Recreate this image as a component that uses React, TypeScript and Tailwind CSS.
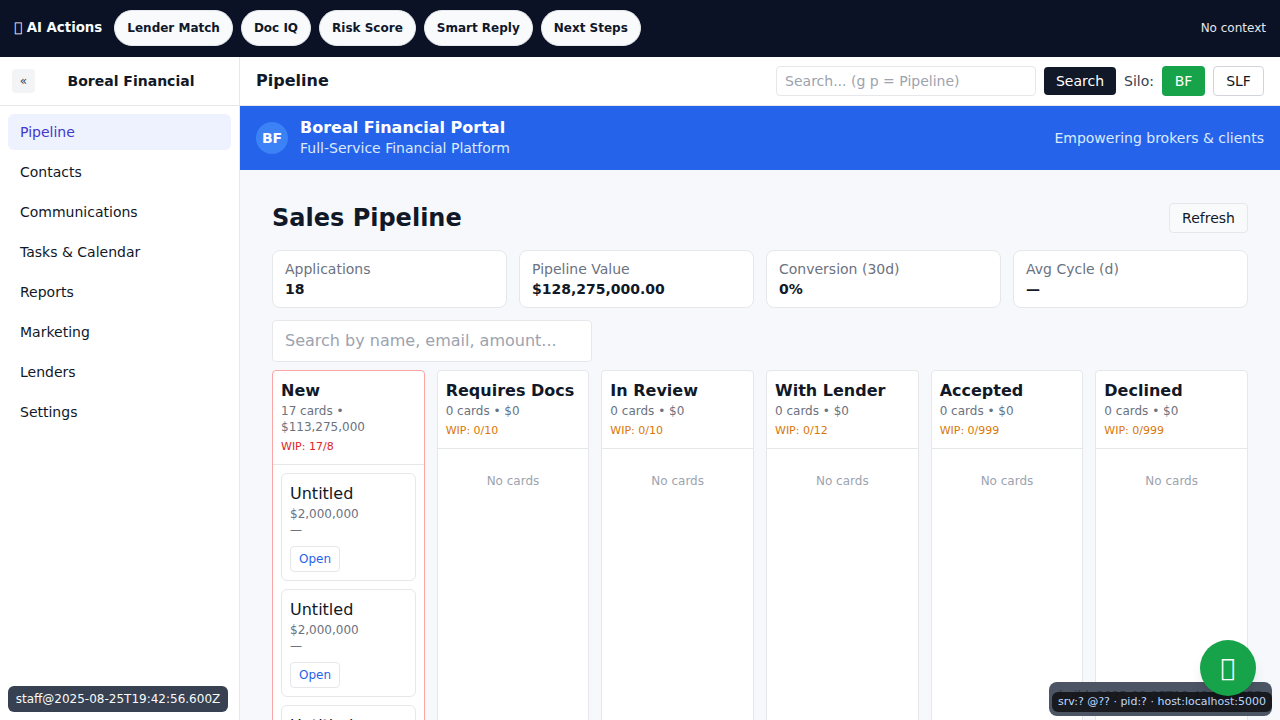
const nav = ["Pipeline", "Contacts", "Communications", "Tasks & Calendar", "Reports", "Marketing", "Lenders", "Settings"];
const actions = ["Lender Match", "Doc IQ", "Risk Score", "Smart Reply", "Next Steps"];
const stats = [
  ["Applications", "18"],
  ["Pipeline Value", "$128,275,000.00"],
  ["Conversion (30d)", "0%"],
  ["Avg Cycle (d)", "—"],
];
const cols = [
  ["Requires Docs", "WIP: 0/10"],
  ["In Review", "WIP: 0/10"],
  ["With Lender", "WIP: 0/12"],
  ["Accepted", "WIP: 0/999"],
  ["Declined", "WIP: 0/999"],
];

function Card() {
  return (
    <div className="rounded-md border border-[#e5e7eb] bg-white px-2 py-2 shrink-0 h-[108px]">
      <div className="text-[16px] leading-[24px] text-[#111827]">Untitled</div>
      <div className="text-[12px] leading-[16px] text-[#6b7280]">$2,000,000</div>
      <div className="text-[12px] leading-[16px] text-[#6b7280]">—</div>
      <button className="mt-2 h-[26px] w-[50px] rounded border border-[#e5e7eb] bg-white text-[12px] text-[#2563eb]">Open</button>
    </div>
  );
}

export default function App() {
  return (
    <div className="w-[1280px] h-[720px] overflow-hidden relative flex flex-col bg-white text-[#111827] font-['DejaVu_Sans',sans-serif]">
      <div className="h-[57px] shrink-0 bg-[#0b1226] flex items-center pl-[14px] pr-[14px] pb-px">
        <span className="text-[13.33px] font-bold text-[#f8fafc] mr-3">{"\u{E000}"} AI Actions</span>
        <div className="flex gap-2">
          {actions.map((a) => (
            <button key={a} className="h-[36px] w-auto px-3 rounded-full bg-[#f8fafc] border border-[#e5e7eb] text-[12px] font-bold text-[#0f172a]">{a}</button>
          ))}
        </div>
        <span className="ml-auto text-[12px] text-[#e5e7eb]">No context</span>
      </div>
      <div className="flex-1 flex min-h-0">
        <aside className="w-[240px] shrink-0 border-r border-[#e5e7eb] bg-white flex flex-col relative">
          <div className="h-[49px] shrink-0 border-b border-[#e5e7eb] flex items-center pl-3 relative">
            <button className="w-[23px] h-[24px] rounded bg-[#f3f4f6] text-[12px] text-[#374151] flex items-center justify-center">«</button>
            <div className="flex-1 text-center text-[14px] font-bold text-[#111827] pr-[12px]">Boreal Financial</div>
          </div>
          <nav className="px-2 pt-2 flex flex-col gap-1">
            {nav.map((n, i) => (
              <div key={n} className={"h-[36px] rounded-md px-3 flex items-center text-[14px] " + (i === 0 ? "bg-[#eef2ff] text-[#4338ca]" : "text-[#111827]")}>{n}</div>
            ))}
          </nav>
          <div className="absolute left-2 top-[629px] h-[26px] w-[220px] rounded-md bg-[#374151] text-[12px] text-[#f9fafb] flex items-center justify-center">staff@2025-08-25T19:42:56.600Z</div>
        </aside>
        <div className="flex-1 min-w-0 flex flex-col bg-[#f7f8fc]">
          <div className="h-[49px] shrink-0 bg-white border-b border-[#e5e7eb] flex items-center pl-4 pr-4">
            <div className="text-[16px] font-bold text-[#111827] flex-1">Pipeline</div>
            <div className="w-[260px] h-[30px] rounded border border-[#e5e7eb] bg-white px-2 flex items-center text-[14px] text-[#9ca3af]">Search... (g p = Pipeline)</div>
            <button className="ml-2 w-[72px] h-[28px] rounded bg-[#111827] text-[14px] text-white">Search</button>
            <span className="ml-2 text-[14px] text-[#374151]">Silo:</span>
            <button className="ml-2 w-[43px] h-[30px] rounded bg-[#16a34a] text-[14px] text-white">BF</button>
            <button className="ml-2 w-[51px] h-[30px] rounded border border-[#d1d5db] bg-white text-[14px] text-[#111827]">SLF</button>
          </div>
          <div className="h-[64px] shrink-0 bg-[#2563eb] flex items-center pl-4 pr-4 text-white">
            <div className="w-8 h-8 rounded-full bg-[#3b82f6] flex items-center justify-center text-[14px] font-bold">BF</div>
            <div className="ml-3 pb-[2px]">
              <div className="text-[16px] leading-[21px] font-bold">Boreal Financial Portal</div>
              <div className="text-[14px] leading-[20px] text-[#dbeafe]">Full-Service Financial Platform</div>
            </div>
            <div className="ml-auto text-[14px] text-[#dbeafe]">Empowering brokers & clients</div>
          </div>
          <div className="flex-1 min-h-0 overflow-hidden px-8 pt-[32px]">
            <div className="flex items-center justify-between h-[32px]">
              <h1 className="text-[24px] font-bold text-[#111827]">Sales Pipeline</h1>
              <button className="w-[79px] h-[30px] rounded border border-[#e5e7eb] bg-[#f9fafb] text-[14px] text-[#111827]">Refresh</button>
            </div>
            <div className="mt-[16px] grid grid-cols-4 gap-3">
              {stats.map(([k, v]) => (
                <div key={k} className="h-[58px] rounded-lg border border-[#e5e7eb] bg-white px-3 py-2">
                  <div className="text-[14px] leading-[20px] text-[#6b7280]">{k}</div>
                  <div className="text-[14px] leading-[20px] font-bold text-[#111827]">{v}</div>
                </div>
              ))}
            </div>
            <div className="mt-3 w-[320px] h-[42px] rounded border border-[#e5e7eb] bg-white px-3 flex items-center text-[16px] text-[#9ca3af]">Search by name, email, amount...</div>
            <div className="mt-2 grid grid-cols-6 gap-3">
              <div className="h-[400px] rounded border border-[#fca5a5] bg-white flex flex-col min-w-0">
                <div className="px-2 pt-2 pb-2 border-b border-[#e5e7eb] h-[94px] shrink-0">
                  <div className="text-[16px] leading-[24px] font-bold text-[#111827]">New</div>
                  <div className="text-[12px] leading-[16px] text-[#6b7280]">17 cards • $113,275,000</div>
                  <div className="mt-1 text-[11px] leading-[16px] text-[#dc2626]">WIP: 17/8</div>
                </div>
                <div className="px-2 pt-2 flex flex-col gap-2">
                  <Card /><Card /><Card />
                </div>
              </div>
              {cols.map(([name, wip]) => (
                <div key={name} className="h-[400px] rounded border border-[#e5e7eb] bg-white flex flex-col min-w-0">
                  <div className="px-2 pt-2 border-b border-[#e5e7eb] h-[78px] shrink-0">
                    <div className="text-[16px] leading-[24px] font-bold text-[#111827] whitespace-nowrap">{name}</div>
                    <div className="text-[12px] leading-[16px] text-[#6b7280]">0 cards • $0</div>
                    <div className="mt-1 text-[11px] leading-[16px] text-[#d97706]">{wip}</div>
                  </div>
                  <div className="pt-6 text-center text-[12px] leading-[16px] text-[#9ca3af]">No cards</div>
                </div>
              ))}
            </div>
          </div>
        </div>
      </div>
      <div className="absolute left-[1049px] top-[682px] w-[223px] h-[34px] rounded-lg bg-[#4b5563] overflow-hidden px-[10px] text-[12px] leading-[28px] text-[#2f3744] whitespace-nowrap">build: 2025-08-25T19:42:56.4857</div>
      <div className="absolute left-[1052px] top-[692px] w-[220px] h-[20px] rounded-md bg-[#111114]/85 pt-[1px] flex items-center justify-center text-[11px] text-[#bfdbfe] whitespace-nowrap">srv:? @?? · pid:? · host:localhost:5000</div>
      <button className="absolute left-[1200px] top-[640px] w-14 h-14 rounded-full bg-[#16a34a] shadow-lg text-[24px] text-white flex items-center justify-center">{"\u{E001}"}</button>
    </div>
  );
}
